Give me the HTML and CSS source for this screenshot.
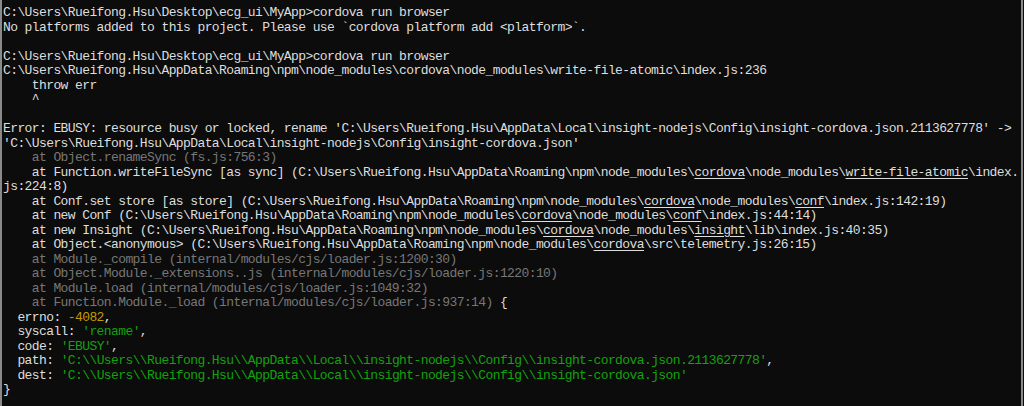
FILE: index.html
```html
<!DOCTYPE html>
<html>
<head>
<meta charset="utf-8">
<link rel="stylesheet" href="styles.css">
</head>
<body>
<div class="console">
<pre class="out">C:\Users\Rueifong.Hsu\Desktop\ecg_ui\MyApp&gt;cordova run browser
No platforms added to this project. Please use `cordova platform add &lt;platform&gt;`.

C:\Users\Rueifong.Hsu\Desktop\ecg_ui\MyApp&gt;cordova run browser
C:\Users\Rueifong.Hsu\AppData\Roaming\npm\node_modules\cordova\node_modules\write-file-atomic\index.js:236
    throw err
    ^

Error: EBUSY: resource busy or locked, rename 'C:\Users\Rueifong.Hsu\AppData\Local\insight-nodejs\Config\insight-cordova.json.2113627778' -&gt;
'C:\Users\Rueifong.Hsu\AppData\Local\insight-nodejs\Config\insight-cordova.json'
<span class="dim">    at Object.renameSync (fs.js:756:3)</span>
    at Function.writeFileSync [as sync] (C:\Users\Rueifong.Hsu\AppData\Roaming\npm\node_modules\<u>cordova</u>\node_modules\<u>write-file-atomic</u>\index.
js:224:8)
    at Conf.set store [as store] (C:\Users\Rueifong.Hsu\AppData\Roaming\npm\node_modules\<u>cordova</u>\node_modules\<u>conf</u>\index.js:142:19)
    at new Conf (C:\Users\Rueifong.Hsu\AppData\Roaming\npm\node_modules\<u>cordova</u>\node_modules\<u>conf</u>\index.js:44:14)
    at new Insight (C:\Users\Rueifong.Hsu\AppData\Roaming\npm\node_modules\<u>cordova</u>\node_modules\<u>insight</u>\lib\index.js:40:35)
    at Object.&lt;anonymous&gt; (C:\Users\Rueifong.Hsu\AppData\Roaming\npm\node_modules\<u>cordova</u>\src\telemetry.js:26:15)
<span class="dim">    at Module._compile (internal/modules/cjs/loader.js:1200:30)
    at Object.Module._extensions..js (internal/modules/cjs/loader.js:1220:10)
    at Module.load (internal/modules/cjs/loader.js:1049:32)
    at Function.Module._load (internal/modules/cjs/loader.js:937:14)</span> {
  errno: <span class="num">-4082</span>,
  syscall: <span class="str">'rename'</span>,
  code: <span class="str">'EBUSY'</span>,
  path: <span class="str">'C:\\Users\\Rueifong.Hsu\\AppData\\Local\\insight-nodejs\\Config\\insight-cordova.json.2113627778'</span>,
  dest: <span class="str">'C:\\Users\\Rueifong.Hsu\\AppData\\Local\\insight-nodejs\\Config\\insight-cordova.json'</span>
}</pre>
</div>
</body>
</html>
```
FILE: styles.css
```css
html, body {
  margin: 0;
  padding: 0;
  background: #0c0c0c;
}

.console {
  width: 1023px;
  height: 406px;
  box-sizing: border-box;
  border-left: 2px solid #8a8a8a;
  border-right: 2px solid #8a8a8a;
  padding: 6px 0 0 1px;
  overflow: hidden;
  background: #0c0c0c;
}

.out {
  margin: 0;
  font-family: "Liberation Mono", "DejaVu Sans Mono", monospace;
  font-size: 13px;
  letter-spacing: -0.6px;
  line-height: 14.5px;
  color: #dedede;
  white-space: pre;
}

.out u {
  text-decoration: underline;
  text-underline-offset: 2px;
}

.dim {
  color: #777777;
}

.num {
  color: #c19c00;
}

.str {
  color: #13a10e;
}
```
